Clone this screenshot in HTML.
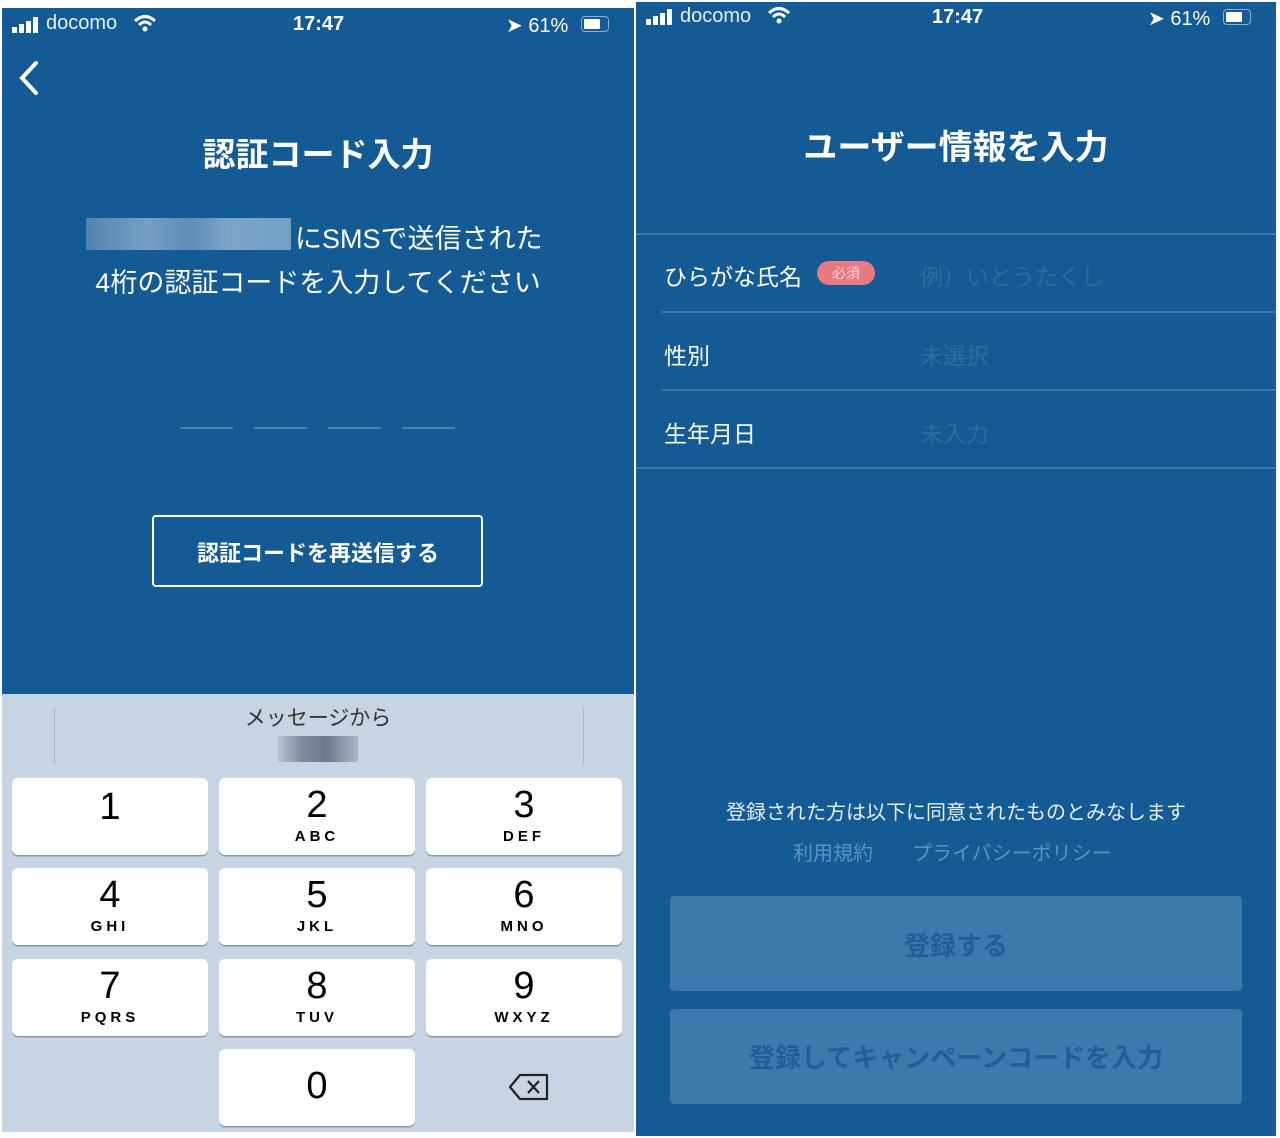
<!DOCTYPE html>
<html><head><meta charset="utf-8"><style>
body{margin:0;width:1280px;height:1138px;background:#fff;position:relative;overflow:hidden;font-family:"Liberation Sans","Noto Sans CJK JP",sans-serif}
.a{position:absolute}
.blue{background:#145b95}
.t{color:#fff;white-space:nowrap}
.key{position:absolute;background:#fff;border-radius:6px;box-shadow:0 1.5px 0 #8a97a6;width:196px;height:77px;text-align:center;color:#000}
.key b{display:block;font-weight:normal;font-size:38px;line-height:38px;margin-top:8px}
.key i{display:block;font-style:normal;font-weight:bold;font-size:15px;letter-spacing:4px;margin-top:4px}
.line{position:absolute;height:2px;background:#3a78ad}
</style></head><body>
<!-- left -->
<div class="a blue" style="left:2px;top:8px;width:632px;height:686px"></div>
<svg class="a" style="left:12px;top:17px" width="30" height="16"><rect x="0" y="10" width="5" height="6" fill="#fff"/><rect x="7" y="7" width="5" height="9" fill="#fff"/><rect x="14" y="4" width="5" height="12" fill="#fff"/><rect x="21" y="0" width="5" height="16" fill="#fff"/></svg>
<div class="a t" style="left:46px;top:12px;font-size:20px;color:#e6eef6">docomo</div>
<svg class="a" style="left:133px;top:14px" width="24" height="18"><path d="M2 7 Q12 -2 22 7" stroke="#fff" stroke-width="3" fill="none"/><path d="M6 11 Q12 5 18 11" stroke="#fff" stroke-width="3" fill="none"/><circle cx="12" cy="15" r="2.5" fill="#fff"/></svg>
<div class="a t" style="left:293px;top:13px;font-size:20px;font-weight:bold">17:47</div>
<div class="a t" style="left:506px;top:13px;font-size:20px">➤ 61%</div>
<div class="a" style="left:581px;top:16px;width:26px;height:14px;border:1.5px solid #8fb0d0;border-radius:4px"><div style="width:16px;height:10px;margin:2px;background:#fff;border-radius:1px"></div></div>
<svg class="a" style="left:14px;top:60px" width="30" height="38"><path d="M22 3 L8 18 L22 33" stroke="#fff" stroke-width="4" fill="none" stroke-linecap="round"/></svg>
<div class="a t" style="left:0;width:636px;text-align:center;top:128px;font-size:33px;font-weight:bold">認証コード入力</div>
<div class="a" style="left:86px;top:218px;width:205px;height:32px;background:linear-gradient(90deg,#5f8cb6,#8eb1d0 30%,#6e98c0 50%,#96b7d4 70%,#8ab0d2);opacity:.8"></div>
<div class="a t" style="left:295px;top:217px;font-size:27px">にSMSで送信された</div>
<div class="a t" style="left:0;width:636px;text-align:center;top:261px;font-size:27px">4桁の認証コードを入力してください</div>
<div class="line" style="left:180px;top:427px;width:53px;background:#4a82b4"></div>
<div class="line" style="left:254px;top:427px;width:53px;background:#4a82b4"></div>
<div class="line" style="left:328px;top:427px;width:53px;background:#4a82b4"></div>
<div class="line" style="left:402px;top:427px;width:53px;background:#4a82b4"></div>
<div class="a" style="left:152px;top:515px;width:327px;height:68px;border:2.5px solid #fff;border-radius:4px"></div>
<div class="a t" style="left:152px;width:332px;text-align:center;top:536px;font-size:22px;font-weight:bold">認証コードを再送信する</div>
<div class="a" style="left:2px;top:694px;width:632px;height:438px;background:#c6d4e3"></div>
<div class="a" style="left:54px;top:708px;width:1px;height:56px;background:#a8b6c6"></div>
<div class="a" style="left:583px;top:708px;width:1px;height:56px;background:#a8b6c6"></div>
<div class="a" style="left:0;width:636px;text-align:center;top:702px;font-size:21px;color:#333">メッセージから</div>
<div class="a" style="left:278px;top:736px;width:80px;height:26px;background:linear-gradient(90deg,#b7c4d3,#7d8ba0 30%,#6c7a90 60%,#a9b6c6)"></div>
<div class="key" style="left:12px;top:778px"><b style="margin-top:10px">1</b></div>
<div class="key" style="left:219px;top:778px"><b>2</b><i>ABC</i></div>
<div class="key" style="left:426px;top:778px"><b>3</b><i>DEF</i></div>
<div class="key" style="left:12px;top:868px"><b>4</b><i>GHI</i></div>
<div class="key" style="left:219px;top:868px"><b>5</b><i>JKL</i></div>
<div class="key" style="left:426px;top:868px"><b>6</b><i>MNO</i></div>
<div class="key" style="left:12px;top:959px"><b>7</b><i>PQRS</i></div>
<div class="key" style="left:219px;top:959px"><b>8</b><i>TUV</i></div>
<div class="key" style="left:426px;top:959px"><b>9</b><i>WXYZ</i></div>
<div class="key" style="left:219px;top:1049px"><b style="margin-top:18px">0</b></div>
<svg class="a" style="left:508px;top:1072px" width="44" height="30"><path d="M12 3 H39 V27 H12 L2 15 Z" stroke="#222" stroke-width="2.2" fill="none" stroke-linejoin="round"/><path d="M20 9 L31 21 M31 9 L20 21" stroke="#222" stroke-width="2.2"/></svg>
<!-- right -->
<div class="a blue" style="left:636px;top:2px;width:640px;height:1134px"></div>
<svg class="a" style="left:646px;top:9px" width="30" height="16"><rect x="0" y="10" width="5" height="6" fill="#fff"/><rect x="7" y="7" width="5" height="9" fill="#fff"/><rect x="14" y="4" width="5" height="12" fill="#fff"/><rect x="21" y="0" width="5" height="16" fill="#fff"/></svg>
<div class="a t" style="left:680px;top:5px;font-size:20px;color:#e6eef6">docomo</div>
<svg class="a" style="left:767px;top:6px" width="24" height="18"><path d="M2 7 Q12 -2 22 7" stroke="#fff" stroke-width="3" fill="none"/><path d="M6 11 Q12 5 18 11" stroke="#fff" stroke-width="3" fill="none"/><circle cx="12" cy="15" r="2.5" fill="#fff"/></svg>
<div class="a t" style="left:932px;top:6px;font-size:20px;font-weight:bold">17:47</div>
<div class="a t" style="left:1148px;top:6px;font-size:20px">➤ 61%</div>
<div class="a" style="left:1223px;top:9px;width:26px;height:14px;border:1.5px solid #8fb0d0;border-radius:4px"><div style="width:16px;height:10px;margin:2px;background:#fff;border-radius:1px"></div></div>
<div class="a t" style="left:636px;width:640px;text-align:center;top:120px;font-size:34px;font-weight:bold">ユーザー情報を入力</div>
<div class="line" style="left:636px;top:233px;width:640px"></div>
<div class="a t" style="left:664px;top:258px;font-size:23px">ひらがな氏名</div>
<div class="a" style="left:817px;top:261px;width:58px;height:24px;border-radius:12px;background:#e8797e;color:#fcd;font-size:14px;text-align:center;line-height:24px">必須</div>
<div class="a" style="left:920px;top:258px;font-size:23px;color:#2b6ca3">例）いとうたくし</div>
<div class="line" style="left:662px;top:311px;width:614px"></div>
<div class="a t" style="left:664px;top:337px;font-size:23px">性別</div>
<div class="a" style="left:920px;top:337px;font-size:23px;color:#2b6ca3">未選択</div>
<div class="line" style="left:662px;top:389px;width:614px"></div>
<div class="a t" style="left:664px;top:415px;font-size:23px">生年月日</div>
<div class="a" style="left:920px;top:415px;font-size:23px;color:#2b6ca3">未入力</div>
<div class="line" style="left:636px;top:467px;width:640px"></div>
<div class="a t" style="left:636px;width:640px;text-align:center;top:796px;font-size:20px;color:#e6eef6">登録された方は以下に同意されたものとみなします</div>
<div class="a" style="left:793px;top:837px;font-size:20px;color:#5a93c4">利用規約</div>
<div class="a" style="left:912px;top:837px;font-size:20px;color:#5a93c4">プライバシーポリシー</div>
<div class="a" style="left:670px;top:896px;width:572px;height:95px;background:#3e79ab;border-radius:4px"></div>
<div class="a" style="left:670px;top:926px;width:572px;text-align:center;font-size:26px;color:#1f5f96;font-weight:bold">登録する</div>
<div class="a" style="left:670px;top:1009px;width:572px;height:95px;background:#3e79ab;border-radius:4px"></div>
<div class="a" style="left:670px;top:1038px;width:572px;text-align:center;font-size:26px;color:#1f5f96;font-weight:bold">登録してキャンペーンコードを入力</div>
</body></html>
